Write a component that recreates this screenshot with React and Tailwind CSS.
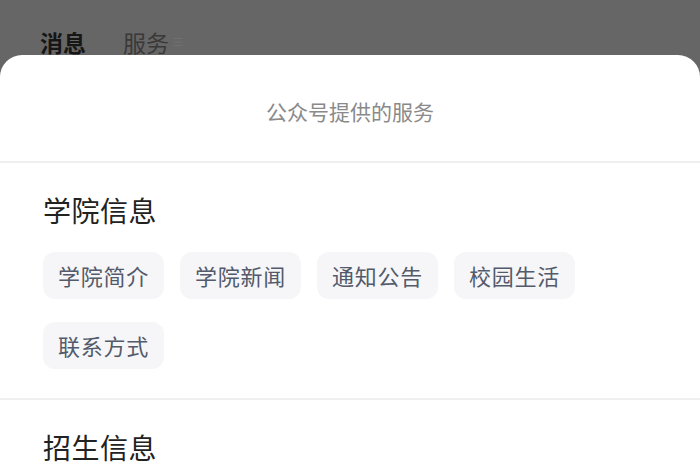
import { Menu } from 'lucide-react';

const sections = [
  { title: '学院信息', items: ['学院简介', '学院新闻', '通知公告', '校园生活', '联系方式'] },
  { title: '招生信息', items: [] },
];

export default function App() {
  return (
    <div className="h-[470px] w-[700px] overflow-hidden bg-[#666666] font-['Noto_Sans_CJK_SC','Noto_Sans',sans-serif]">
      <div className="flex h-[55px] items-start gap-[37px] pl-[40px] pt-[27px] text-[23px] leading-[30px]">
        <span className="font-bold text-[#161616]">消息</span>
        <span className="flex items-center gap-[3px] text-[#393939]">
          服务
          <Menu size={12} strokeWidth={1.25} className="text-[#767676]" />
        </span>
      </div>

      <div className="rounded-t-[22px] bg-white">
        <div className="flex h-[106px] items-center justify-center pt-[8px] text-[21px] text-[#8a8a8a]">
          公众号提供的服务
        </div>

        {sections.map((section) => (
          <div key={section.title} className="border-t-2 border-[#efefef] pb-[29px] pl-[43px] pr-[40px] pt-[28px]">
            <h2 className="text-[28px] leading-[38px] tracking-[0.5px] text-[#222222]">{section.title}</h2>
            {section.items.length > 0 && (
              <div className="mt-[23px] flex flex-wrap gap-x-[16px] gap-y-[23px]">
                {section.items.map((item) => (
                  <span
                    key={item}
                    className="flex h-[47px] items-center rounded-[12px] bg-[#f6f6f8] px-[15px] text-[22px] tracking-[0.75px] text-[#525a6b]"
                  >
                    {item}
                  </span>
                ))}
              </div>
            )}
          </div>
        ))}
      </div>
    </div>
  );
}
